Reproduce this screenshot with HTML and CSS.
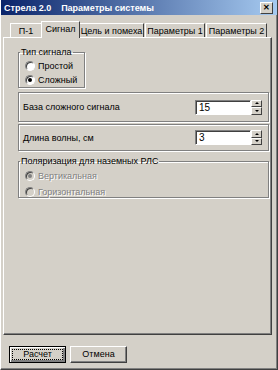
FILE: index.html
```html
<!DOCTYPE html>
<html lang="ru">
<head>
    <meta charset="UTF-8">
    <link rel="stylesheet" href="styles.css">
</head>
<body>
    <div class="window">
        <div class="titlebar">
            <span class="title">Стрела 2.0&nbsp;&nbsp;&nbsp; Параметры системы</span>
            <span class="close">&#x2715;</span>
        </div>

        <div class="tabs">
            <span class="tab t1">П-1</span>
            <span class="tab active">Сигнал</span>
            <span class="tab t3">Цель и помеха</span>
            <span class="tab t4">Параметры 1</span>
            <span class="tab t5">Параметры 2</span>
        </div>

        <div class="panel">
            <fieldset class="group type">
                <legend>Тип сигнала</legend>
                <label class="radio"><span class="dot"></span>Простой</label>
                <label class="radio"><span class="dot on"></span>Сложный</label>
            </fieldset>

            <div class="box base">
                <span class="label">База сложного сигнала</span>
                <div class="spin">
                    <span class="field">15</span>
                    <span class="arrows"><span class="up"></span><span class="down"></span></span>
                </div>
            </div>

            <div class="box wave">
                <span class="label">Длина волны, см</span>
                <div class="spin">
                    <span class="field">3</span>
                    <span class="arrows"><span class="up"></span><span class="down"></span></span>
                </div>
            </div>

            <fieldset class="group polar">
                <legend>Поляризация для наземных РЛС</legend>
                <label class="radio off"><span class="dot on"></span>Вертикальная</label>
                <label class="radio off"><span class="dot"></span>Горизонтальная</label>
            </fieldset>
        </div>

        <div class="buttons">
            <span class="btn default"><span class="focus">Расчет</span></span>
            <span class="btn">Отмена</span>
        </div>
    </div>
</body>
</html>
```
FILE: styles.css
```css
body {
    margin: 0;
    font-family: "Liberation Sans", Arial, sans-serif;
    font-size: 9px;
    color: #000;
}
.window {
    width: 278px;
    height: 370px;
    box-sizing: border-box;
    background: #d4d0c8;
    border-left: 1px solid #fff;
    border-right: 1px solid #404040;
    border-bottom: 1px solid #404040;
    box-shadow: inset -1px -1px 0 #808080, inset 1px 0 0 #d4d0c8;
}

/* title */
.titlebar {
    height: 15px;
    display: flex;
    align-items: center;
    justify-content: space-between;
    padding: 0 4px 0 3px;
    background: linear-gradient(to right, #0a246a, #a6caf0);
}
.title {
    color: #fff;
    font-weight: bold;
}
.close {
    width: 11px;
    height: 10px;
    background: #d4d0c8;
    border: 1px solid;
    border-color: #fff #404040 #404040 #fff;
    font-size: 8px;
    font-weight: bold;
    line-height: 10px;
    text-align: center;
}

/* tabs */
.tabs {
    display: flex;
    align-items: flex-end;
    height: 22px;
    padding-left: 9px;
}
.tab {
    height: 14px;
    line-height: 14px;
    box-sizing: border-box;
    border: 1px solid;
    border-color: #fff #404040 transparent #fff;
    border-bottom: none;
    white-space: nowrap;
    text-align: center;
    margin-right: 1px;
}
.t1 { width: 32px; }
.t3 { width: 65px; }
.t4 { width: 60px; }
.t5 { width: 61px; }
.tab.active {
    width: 39px;
    height: 17px;
    line-height: 15px;
    margin: 0 -1px -1px -2px;
    background: #d4d0c8;
    position: relative;
    z-index: 1;
}

.panel {
    margin-left: 2px;
    width: 269px;
    height: 298px;
    box-sizing: border-box;
    border: 1px solid;
    border-color: #fff #404040 #404040 #fff;
    box-shadow: inset -1px -1px 0 #808080;
    padding: 8px 0 0 14px;
}

/* groups */
.group {
    margin: 0;
    padding: 1px 4px 2px 6px;
    border: 1px solid #808080;
    box-shadow: 1px 1px 0 #fff, inset 1px 1px 0 #fff;
}
.group legend {
    padding: 0 1px;
    margin-left: -5px;
    line-height: 12px;
}
.type { width: 67px; box-sizing: border-box; height: 42px; }
.polar { width: 251px; box-sizing: border-box; height: 43px; margin-top: 4px; }

.radio {
    display: flex;
    align-items: center;
    height: 14px;
    gap: 3px;
}
.polar .radio { height: 16px; }
.dot {
    width: 10px;
    height: 10px;
    box-sizing: border-box;
    border-radius: 50%;
    background: #fff;
    border: 1px solid;
    border-color: #808080 #fff #fff #808080;
    box-shadow: inset 1px 1px 0 #404040;
    display: flex;
    align-items: center;
    justify-content: center;
}
.dot.on::after {
    content: "";
    width: 4px;
    height: 4px;
    border-radius: 50%;
    background: #000;
}
.radio.off { color: #808080; text-shadow: 1px 1px 0 #fff; }
.radio.off .dot { background: #d4d0c8; }
.radio.off .dot.on::after { background: #808080; }

/* boxes with spinners */
.box {
    width: 251px;
    box-sizing: border-box;
    display: flex;
    align-items: center;
    justify-content: space-between;
    padding: 0 6px 0 4px;
    border: 1px solid #808080;
    box-shadow: 1px 1px 0 #fff, inset 1px 1px 0 #fff;
}
.base { height: 30px; margin-top: 4px; }
.wave { height: 27px; margin-top: 2px; }
.spin { display: flex; }
.field {
    width: 56px;
    height: 15px;
    box-sizing: border-box;
    background: #fff;
    border: 1px solid;
    border-color: #808080 #fff #fff #808080;
    box-shadow: inset 1px 1px 0 #404040;
    padding-left: 3px;
    line-height: 13px;
    font-size: 10px;
}
.arrows {
    display: flex;
    flex-direction: column;
    width: 11px;
    height: 15px;
}
.arrows span {
    flex: 1;
    border: 1px solid;
    border-color: #fff #404040 #404040 #fff;
    background: #d4d0c8;
    display: flex;
    align-items: center;
    justify-content: center;
}
.arrows .up::after {
    content: "";
    border: 2px solid transparent;
    border-bottom: 2px solid #000;
    border-top: 0;
}
.arrows .down::after {
    content: "";
    border: 2px solid transparent;
    border-top: 2px solid #000;
    border-bottom: 0;
}

/* buttons */
.buttons {
    display: flex;
    gap: 4px;
    padding: 11px 0 0 8px;
}
.btn {
    width: 57px;
    height: 17px;
    box-sizing: border-box;
    border: 1px solid;
    border-color: #fff #404040 #404040 #fff;
    box-shadow: inset -1px -1px 0 #808080;
    text-align: center;
    line-height: 15px;
}
.btn.default {
    border: 1px solid #000;
    box-shadow: inset 1px 1px 0 #fff, inset -2px -2px 0 #808080;
    padding: 2px;
}
.focus {
    display: block;
    border: 1px dotted #000;
    line-height: 9px;
    height: 11px;
    box-sizing: border-box;
}
```
